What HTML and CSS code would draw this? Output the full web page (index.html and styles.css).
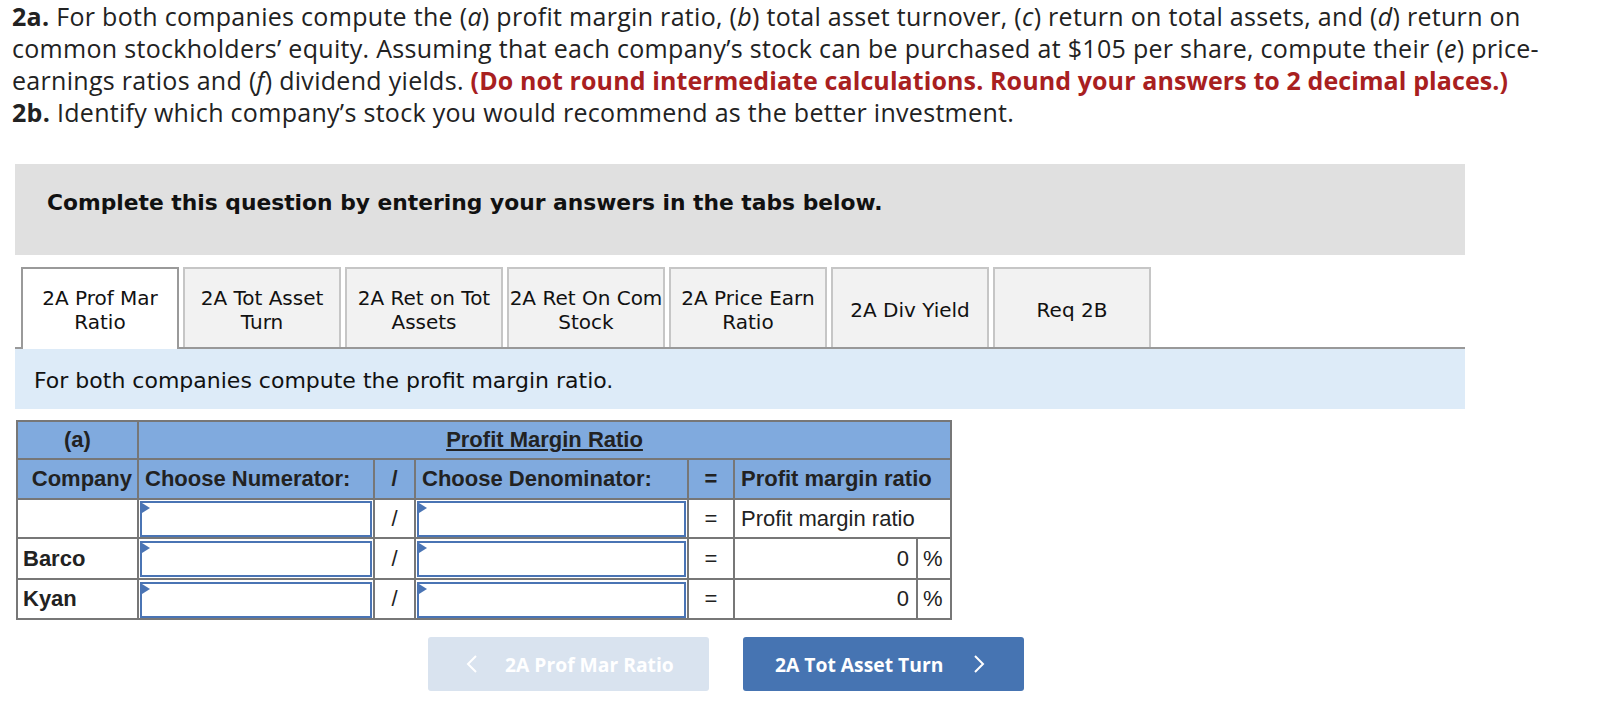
FILE: index.html
```html
<!DOCTYPE html>
<html>
<head>
<meta charset="utf-8">
<link rel="stylesheet" href="styles.css">
</head>
<body>
<div class="question">
<p><b>2a.</b> For both companies compute the (<i>a</i>) profit margin ratio, (<i>b</i>) total asset turnover, (<i>c</i>) return on total assets, and (<i>d</i>) return on<br>common stockholders’ equity. Assuming that each company’s stock can be purchased at $105 per share, compute their (<i>e</i>) price-<br>earnings ratios and (<i>f</i>) dividend yields. <strong class="red">(Do not round intermediate calculations. Round your answers to 2 decimal places.)</strong></p>
<p><b>2b.</b> Identify which company’s stock you would recommend as the better investment.</p>
</div>

<div class="main">
  <div class="banner">Complete this question by entering your answers in the tabs below.</div>

  <div class="tabs">
    <div class="tab active">2A Prof Mar<br>Ratio</div>
    <div class="tab">2A Tot Asset<br>Turn</div>
    <div class="tab">2A Ret on Tot<br>Assets</div>
    <div class="tab">2A Ret On Com<br>Stock</div>
    <div class="tab">2A Price Earn<br>Ratio</div>
    <div class="tab">2A Div Yield</div>
    <div class="tab">Req 2B</div>
  </div>

  <div class="instr">For both companies compute the profit margin ratio.</div>

  <table class="grid">
    <colgroup>
      <col class="c-co"><col class="c-num"><col class="c-op"><col class="c-den"><col class="c-eq"><col class="c-res"><col class="c-pct">
    </colgroup>
    <tr class="hd r1">
      <th>(a)</th>
      <th colspan="6" class="title"><u>Profit Margin Ratio</u></th>
    </tr>
    <tr class="hd r2">
      <th class="co">Company</th>
      <th class="lft">Choose Numerator:</th>
      <th>/</th>
      <th class="lft">Choose Denominator:</th>
      <th>=</th>
      <th class="lft" colspan="2">Profit margin ratio</th>
    </tr>
    <tr class="r3">
      <td></td>
      <td class="in"><div class="box"><span class="tri"></span></div></td>
      <td class="op">/</td>
      <td class="in"><div class="box"><span class="tri"></span></div></td>
      <td class="op">=</td>
      <td class="lft" colspan="2">Profit margin ratio</td>
    </tr>
    <tr class="r4">
      <td class="name">Barco</td>
      <td class="in"><div class="box"><span class="tri"></span></div></td>
      <td class="op">/</td>
      <td class="in"><div class="box"><span class="tri"></span></div></td>
      <td class="op">=</td>
      <td class="num">0</td>
      <td class="pct">%</td>
    </tr>
    <tr class="r5">
      <td class="name">Kyan</td>
      <td class="in"><div class="box"><span class="tri"></span></div></td>
      <td class="op">/</td>
      <td class="in"><div class="box"><span class="tri"></span></div></td>
      <td class="op">=</td>
      <td class="num">0</td>
      <td class="pct">%</td>
    </tr>
  </table>

  <div class="nav">
    <div class="btn prev">
      <svg class="chev" width="12" height="20" viewBox="0 0 12 20"><path d="M10 2 L2 10 L10 18" fill="none" stroke="#fff" stroke-width="2"/></svg>
      <span>2A Prof Mar Ratio</span>
    </div>
    <div class="btn next">
      <span>2A Tot Asset Turn</span>
      <svg class="chev" width="12" height="20" viewBox="0 0 12 20"><path d="M2 2 L10 10 L2 18" fill="none" stroke="#fff" stroke-width="2"/></svg>
    </div>
  </div>
</div>
</body>
</html>
```

FILE: styles.css
```css
body {
  margin: 0;
  background: #fff;
  color: #222;
}

.question {
  padding-left: 12px;
  font-family: "Open Sans", "Liberation Sans", sans-serif;
  font-size: 25px;
  letter-spacing: 0.3px;
  line-height: 32px;
  color: #222;
}
.question p {
  margin: 0;
}
.question b {
  font-weight: 700;
}
.question .red {
  color: #a8201f;
  font-weight: 700;
  letter-spacing: 0.1px;
}

.main {
  margin-left: 15px;
  width: 1450px;
  margin-top: 36px;
}

.banner {
  height: 91px;
  box-sizing: border-box;
  background: #e0e0e0;
  padding: 26px 0 0 32px;
  font-family: "DejaVu Sans", Verdana, sans-serif;
  font-weight: bold;
  font-size: 21.8px;
  line-height: 26px;
  color: #111;
}

.tabs {
  margin-top: 12px;
  display: flex;
  gap: 4px;
  padding-left: 6px;
  border-bottom: 2px solid #999;
  height: 80px;
}
.tab {
  width: 158px;
  height: 80px;
  box-sizing: border-box;
  border: 2px solid #c6c6c6;
  border-bottom: none;
  background: #f2f2f2;
  display: flex;
  align-items: center;
  justify-content: center;
  text-align: center;
  white-space: nowrap;
  padding-top: 4px;
  font-family: "DejaVu Sans", Verdana, sans-serif;
  font-size: 20px;
  line-height: 24px;
  color: #111;
}
.tab.active {
  background: #fff;
  border-color: #9a9a9a;
  height: 82px;
  padding-top: 2px;
}

.instr {
  height: 60px;
  box-sizing: border-box;
  background: #ddebf8;
  padding: 19px 0 0 19px;
  font-family: "DejaVu Sans", Verdana, sans-serif;
  font-size: 22px;
  line-height: 26px;
  color: #111;
}

.grid {
  margin-top: 11px;
  margin-left: 1px;
  border-collapse: collapse;
  table-layout: fixed;
  width: 934px;
  font-family: "Liberation Sans", Arial, sans-serif;
  font-size: 22px;
  color: #222;
}
.c-co { width: 121px; }
.c-num { width: 236px; }
.c-op { width: 41px; }
.c-den { width: 273px; }
.c-eq { width: 46px; }
.c-res { width: 183px; }
.c-pct { width: 34px; }

.grid th, .grid td {
  border: 2px solid #777;
  padding: 0;
  vertical-align: middle;
  text-align: center;
  font-weight: normal;
}
.grid .hd th {
  background: #80aade;
  font-weight: bold;
}
.grid .r1 { height: 38px; }
.grid .r2 { height: 40px; }
.grid .r3 { height: 39px; }
.grid .r4 { height: 41px; }
.grid .r5 { height: 40px; }

.grid th.co {
  text-align: right;
  padding-right: 5px;
}
.grid .lft {
  text-align: left;
  padding-left: 6px;
}
.grid td.name {
  text-align: left;
  padding-left: 5px;
  font-weight: bold;
}
.grid td.num {
  text-align: right;
  padding-right: 7px;
}
.grid td.pct {
  text-align: left;
  padding-left: 5px;
}
.grid td.in {
  padding: 1px 1px 0 1px;
}
.box {
  position: relative;
  height: 36px;
  box-sizing: border-box;
  border: 2px solid #4a74b4;
  background: #fff;
}
.tri {
  position: absolute;
  left: 0;
  top: 0;
  width: 0;
  height: 0;
  border-left: 8px solid #4a74b4;
  border-top: 5px solid transparent;
  border-bottom: 5px solid transparent;
}

.nav {
  display: flex;
  gap: 34px;
  margin-top: 17px;
  padding-left: 413px;
}
.btn {
  height: 54px;
  box-sizing: border-box;
  border-radius: 3px;
  display: flex;
  align-items: center;
  font-family: "Open Sans", "Liberation Sans", sans-serif;
  font-weight: bold;
  font-size: 19.3px;
  color: #fff;
}
.btn.prev {
  width: 281px;
  background: #d9e3ef;
  padding-left: 38px;
  gap: 27px;
}
.btn.next {
  width: 281px;
  background: #4674b2;
  padding-left: 32px;
  gap: 30px;
}
.chev {
  display: block;
}
```
